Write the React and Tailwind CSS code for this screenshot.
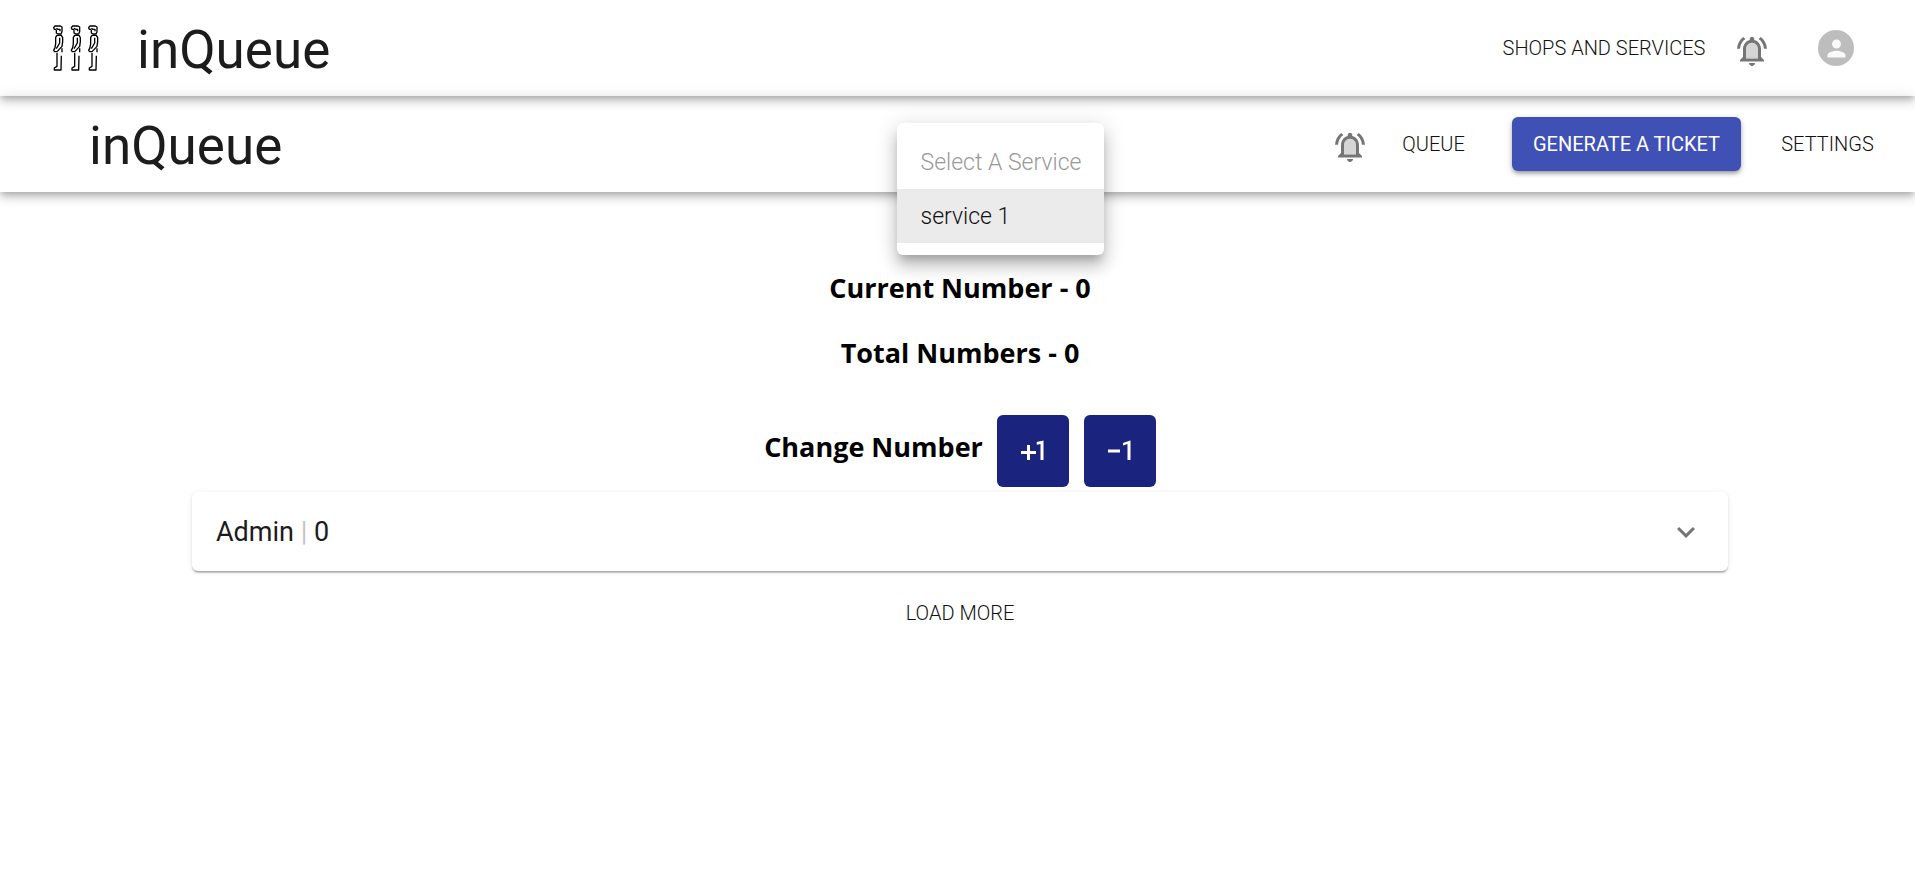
import React from 'react';
import { MdExpandMore, MdExposureNeg1, MdPerson, MdPlusOne } from 'react-icons/md';

const navLink = 'flex h-[54px] items-center justify-center text-[20px] font-light uppercase whitespace-nowrap text-[#111]';
const title = 'grow pt-1 text-[53px] leading-[60px] text-[#1c1c1c]';
const barShadow = 'shadow-[0_3px_6px_-2px_rgba(0,0,0,0.2),0_6px_8px_0_rgba(0,0,0,0.14),0_2px_15px_0_rgba(0,0,0,0.12)]';
const heading = "font-['Open_Sans',sans-serif] text-[27px] leading-[36px] font-bold text-black";

function BellIcon() {
  return (
    <svg viewBox="0 0 24 24" className="size-9 fill-[#757575]" aria-hidden="true">
      <path opacity=".3" d="M12 6.5c-2.49 0-4 2.02-4 4.5v6h8v-6c0-2.48-1.51-4.5-4-4.5z" />
      <path d="M12 22c1.1 0 2-.9 2-2h-4c0 1.1.9 2 2 2zm6-6v-5c0-3.07-1.63-5.64-4.5-6.32V4c0-.83-.67-1.5-1.5-1.5s-1.5.67-1.5 1.5v.68C7.64 5.36 6 7.92 6 11v5l-2 2v1h16v-1l-2-2zm-2 1H8v-6c0-2.48 1.51-4.5 4-4.5s4 2.02 4 4.5v6zM7.58 4.08L6.15 2.65C3.75 4.48 2.17 7.3 2.03 10.5h2c.15-2.65 1.51-4.97 3.55-6.42zm12.39 6.42h2c-.15-3.2-1.73-6.02-4.12-7.85l-1.42 1.43c2.02 1.45 3.39 3.77 3.54 6.42z" />
    </svg>
  );
}

function Person({ x }) {
  return (
    <g transform={`translate(${x} 0)`}>
      <path d="M10 13 H4 L2 8 L6 3 H22 L27 6 V20 L24 27 H15 L10 24 V15" />
      <path d="M10 10 L15 13 H21 V19" />
      <path d="M12 31 L8 37 V56 L6 68 L2 76 L5 80 L13 79 L27 64 L29 50 V38 L25 31 Z" />
      <path d="M20 38 V54 L10 71" />
      <path d="M12 83 V124 L4 129 V135 H24 L25 92" />
      <path d="M27 70 V82" />
    </g>
  );
}

function QueueLogo() {
  return (
    <svg viewBox="0 0 138 138" className="size-[46px] fill-none stroke-black stroke-[4]" strokeLinejoin="round" aria-hidden="true">
      <Person x={0} />
      <Person x={53} />
      <Person x={105} />
    </svg>
  );
}

export default function App() {
  return (
    <div className="min-h-screen bg-white font-[Roboto,sans-serif]">
      <header className={`flex h-24 items-center pr-[61px] pl-[53px] ${barShadow}`}>
        <QueueLogo />
        <span className={`${title} ml-[38px]`}>inQueue</span>
        <nav className="flex items-center">
          <a href="#shops" className={`${navLink} w-[200px]`}>Shops and Services</a>
          <button type="button" aria-label="Notifications" className="mt-[6px] ml-[30px]"><BellIcon /></button>
          <button type="button" aria-label="Account" className="ml-12 flex size-9 items-center justify-center rounded-full bg-[#bdbdbd]">
            <MdPerson className="size-[27px] text-[#fafafa]" />
          </button>
        </nav>
      </header>

      <div className={`relative flex h-24 items-center pr-[43px] pl-[89px] ${barShadow}`}>
        <span className={title}>inQueue</span>
        <ul role="listbox" aria-label="Service" className="absolute top-[27px] left-1/2 z-10 -ml-[61px] w-[207px] rounded-md bg-white py-3 text-[23px] font-light text-[#111] shadow-[0_8px_8px_-4px_rgba(0,0,0,0.2),0_12px_15px_1px_rgba(0,0,0,0.14),0_4px_21px_3px_rgba(0,0,0,0.12)]">
          <li role="option" aria-disabled="true" aria-selected="false" className="flex h-[54px] items-center px-6 pt-[2px] whitespace-nowrap text-[#999]">Select A Service</li>
          <li role="option" aria-selected="true" className="flex h-[54px] items-center bg-[#ebebeb] px-6 pt-[2px]">service 1</li>
        </ul>
        <nav className="flex items-center">
          <button type="button" aria-label="Notifications" className="mt-[6px]"><BellIcon /></button>
          <a href="#queue" className={`${navLink} ml-8 w-[67px]`}>Queue</a>
          <button type="button" className="ml-[45px] h-[54px] w-[229px] rounded-md bg-[#3f51b5] text-[20px] whitespace-nowrap text-white uppercase shadow-[0_3px_4px_-1px_rgba(0,0,0,0.3),0_2px_6px_0_rgba(0,0,0,0.2)]">Generate a Ticket</button>
          <a href="#settings" className={`${navLink} ml-[42px] w-[89px]`}>Settings</a>
        </nav>
      </div>

      <main className="flex flex-col items-center pt-[78px] pl-[5px]">
        <h2 className={heading}>Current Number - 0</h2>
        <h2 className={`${heading} mt-[29px]`}>Total Numbers - 0</h2>
        <div className="mt-[44px] flex items-center">
          <h2 className={`${heading} mb-2`}>Change Number</h2>
          <button type="button" aria-label="Plus one" className="ml-[14px] flex size-[72px] items-center justify-center rounded-md bg-[#1a237e] text-white"><MdPlusOne className="size-9" /></button>
          <button type="button" aria-label="Minus one" className="ml-[15px] flex size-[72px] items-center justify-center rounded-md bg-[#1a237e] text-white"><MdExposureNeg1 className="size-9" /></button>
        </div>
        <button type="button" aria-expanded="false" className="mt-[5px] flex h-[79px] w-[calc(80%+8px)] items-center rounded-md bg-white px-6 text-[27px] text-[#1c1c1c] shadow-[0_3px_2px_-2px_rgba(0,0,0,0.2),0_2px_1px_0_rgba(0,0,0,0.14),0_1px_5px_0_rgba(0,0,0,0.12)]">
          <span className="pt-[2px]">Admin <span className="text-[#c4c4c4]">|</span> 0</span>
          <MdExpandMore className="ml-auto size-9 text-[#757575]" />
        </button>
        <button type="button" className={`${navLink} mt-[15px] px-3`}>Load More</button>
      </main>
    </div>
  );
}
